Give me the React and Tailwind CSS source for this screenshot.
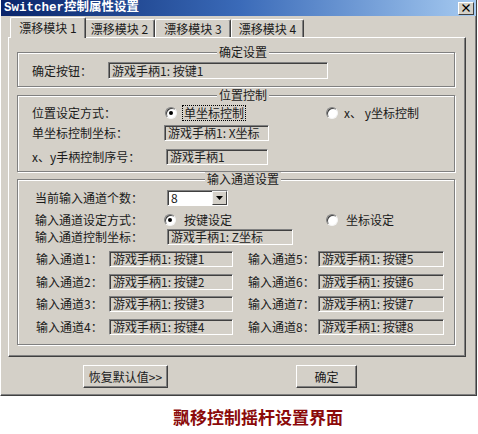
import React from 'react'

const cjk = "font-['Noto_Sans_CJK_SC',sans-serif]"

function Sunken({ className = '', children }) {
  return (
    <div
      className={`flex items-center pl-[3px] border border-t-[#808080] border-l-[#808080] border-r-white border-b-white shadow-[inset_1px_1px_0_#404040] text-[12px] leading-none whitespace-nowrap overflow-hidden text-[#222] ${className}`}
    >
      {children}
    </div>
  )
}

function Radio({ checked }) {
  return (
    <span className="w-[12px] h-[12px] rounded-full bg-white border border-t-[#808080] border-l-[#808080] border-r-[#f4f4f4] border-b-[#f4f4f4] shadow-[inset_1px_1px_0_#404040] flex items-center justify-center shrink-0">
      {checked && <span className="w-[4px] h-[4px] rounded-full bg-black" />}
    </span>
  )
}

function Group({ title, className = '', children }) {
  return (
    <fieldset
      className={`border border-[#808080] shadow-[inset_1px_1px_0_#fff,1px_1px_0_#fff] pl-[14px] ${className}`}
    >
      <legend className="mx-auto px-[2px] h-[14px] text-[12px] leading-[14px] bg-[#d4d0c8]">{title}</legend>
      {children}
    </fieldset>
  )
}

function Tab({ label, active, className = '' }) {
  return (
    <div
      className={`flex items-center justify-center text-[12px] leading-none border-t border-l border-t-white border-l-white border-r border-r-[#404040] shadow-[inset_-1px_0_0_#808080] rounded-t-[2px] ${
        active ? 'h-[21px] -mb-[1px] relative z-10 bg-[#d4d0c8] -mx-[2px]' : 'h-[18px]'
      } ${className}`}
    >
      {label}
    </div>
  )
}

function Button({ children, className = '' }) {
  return (
    <div
      className={`h-[23px] flex items-center justify-center text-[12px] leading-none border border-t-white border-l-white border-r-[#404040] border-b-[#404040] shadow-[inset_-1px_-1px_0_#808080] ${className}`}
    >
      {children}
    </div>
  )
}

const channels = [
  ['输入通道1：', '游戏手柄1: 按键1', '输入通道5：', '游戏手柄1: 按键5'],
  ['输入通道2：', '游戏手柄1: 按键2', '输入通道6：', '游戏手柄1: 按键6'],
  ['输入通道3：', '游戏手柄1: 按键3', '输入通道7：', '游戏手柄1: 按键7'],
  ['输入通道4：', '游戏手柄1: 按键4', '输入通道8：', '游戏手柄1: 按键8'],
]
const channelGaps = ['mt-[6px]', 'mt-[7px]', 'mt-[6px]', 'mt-[7px]']

export default function App() {
  return (
    <div className={`w-[478px] h-[434px] bg-white ${cjk} text-[#1a1a1a]`}>
      {/* window */}
      <div className="w-[477px] h-[396px] flex flex-col bg-[#d4d0c8] border-l border-r border-b border-l-white border-r-[#404040] border-b-[#404040] shadow-[inset_-1px_-1px_0_#808080]">
        {/* title bar */}
        <div className="h-[16px] flex items-center justify-between bg-linear-to-r from-[#0a246a] via-[#3a6ab8] to-[#a6caf0] pl-[3px] pr-[2px]">
          <span className="font-['Liberation_Mono','Noto_Sans_CJK_SC',monospace] text-[12.5px] leading-[16px] text-white font-bold whitespace-nowrap">
            Switcher控制属性设置
          </span>
          <div className="w-[16px] h-[13px] flex items-center justify-center bg-[#d4d0c8] border border-t-white border-l-white border-r-[#404040] border-b-[#404040] text-[12px] font-bold leading-none text-black">
            ×
          </div>
        </div>

        <div className="flex flex-col pl-[7px]">
          {/* tabs */}
          <div className="flex items-end h-[20px] mt-[1px] pl-[4px]">
            <Tab label="漂移模块 1" active className="w-[76px]" />
            <Tab label="漂移模块 2" className="w-[71px]" />
            <Tab label="漂移模块 3" className="w-[76px]" />
            <Tab label="漂移模块 4" className="w-[73px]" />
          </div>

          {/* tab panel */}
          <div className="w-[458px] h-[320px] flex flex-col pt-[7px] pl-[8px] pr-[10px] border border-t-white border-l-white border-r-[#404040] border-b-[#404040] shadow-[inset_-1px_-1px_0_#808080] text-[12px] leading-none">
            <Group title="确定设置" className="pb-[7px]">
              <div className="flex items-center h-[17px] mt-[3px]">
                <span className="w-[76px]">确定按钮：</span>
                <Sunken className="w-[220px] h-[17px]">游戏手柄1: 按键1</Sunken>
              </div>
            </Group>

            <Group title="位置控制" className="mt-[1px] pb-[6px]">
              <div className="flex items-center h-[16px] mt-[3px]">
                <span className="w-[133px]">位置设定方式：</span>
                <Radio checked />
                <span className="ml-[5px] px-[1px] py-[1px] border border-dotted border-black">单坐标控制</span>
                <span className="ml-[80px]">
                  <Radio />
                </span>
                <span className="ml-[6px]">x、&nbsp;y坐标控制</span>
              </div>
              <div className="flex items-center h-[16px] mt-[4px]">
                <span className="w-[132px]">单坐标控制坐标：</span>
                <Sunken className="w-[105px] h-[16px]">游戏手柄1: X坐标</Sunken>
              </div>
              <div className="flex items-center h-[16px] mt-[8px]">
                <span className="w-[134px]">x、y手柄控制序号：</span>
                <Sunken className="w-[102px] h-[16px]">游戏手柄1</Sunken>
              </div>
            </Group>

            <Group title="输入通道设置" className="pb-[9px]">
              <div className="flex items-center h-[16px] mt-[4px] pl-[3px]">
                <span className="w-[132px]">当前输入通道个数：</span>
                <div className="w-[61px] h-[16px] flex items-center bg-white border border-t-[#808080] border-l-[#808080] border-r-white border-b-white shadow-[inset_1px_1px_0_#404040]">
                  <span className="flex-1 pl-[3px]">8</span>
                  <div className="w-[15px] h-[14px] flex items-center justify-center bg-[#d4d0c8] border border-t-[#f4f4f4] border-l-[#f4f4f4] border-r-[#404040] border-b-[#404040]">
                    <svg width="7" height="4" viewBox="0 0 7 4">
                      <path d="M0 0H7L3.5 4Z" fill="#000" />
                    </svg>
                  </div>
                </div>
              </div>
              <div className="flex items-center h-[16px] mt-[6px] pl-[3px]">
                <span className="w-[129px]">输入通道设定方式：</span>
                <Radio checked />
                <span className="ml-[8px]">按键设定</span>
                <span className="ml-[94px]">
                  <Radio />
                </span>
                <span className="ml-[8px]">坐标设定</span>
              </div>
              <div className="flex items-center h-[16px] mt-[1px] pl-[3px]">
                <span className="w-[132px]">输入通道控制坐标：</span>
                <Sunken className="w-[126px] h-[16px]">游戏手柄1: Z坐标</Sunken>
              </div>
              {channels.map((c, i) => (
                <div key={c[0]} className={`flex items-center h-[16px] pl-[4px] ${channelGaps[i]}`}>
                  <span className="w-[73px]">{c[0]}</span>
                  <Sunken className="w-[124px] h-[16px]">{c[1]}</Sunken>
                  <span className="w-[70px] ml-[15px]">{c[2]}</span>
                  <Sunken className="w-[126px] h-[16px]">{c[3]}</Sunken>
                </div>
              ))}
            </Group>
          </div>

          {/* buttons */}
          <div className="flex mt-[8px]">
            <Button className="w-[85px] ml-[75px]">恢复默认值&gt;&gt;</Button>
            <Button className="w-[61px] ml-[128px]">确定</Button>
          </div>
        </div>
      </div>

      {/* caption */}
      <div className="mt-[11px] pl-[173px] text-[17px] leading-[20px] font-bold text-[#8b0a0a]">飘移控制摇杆设置界面</div>
    </div>
  )
}
